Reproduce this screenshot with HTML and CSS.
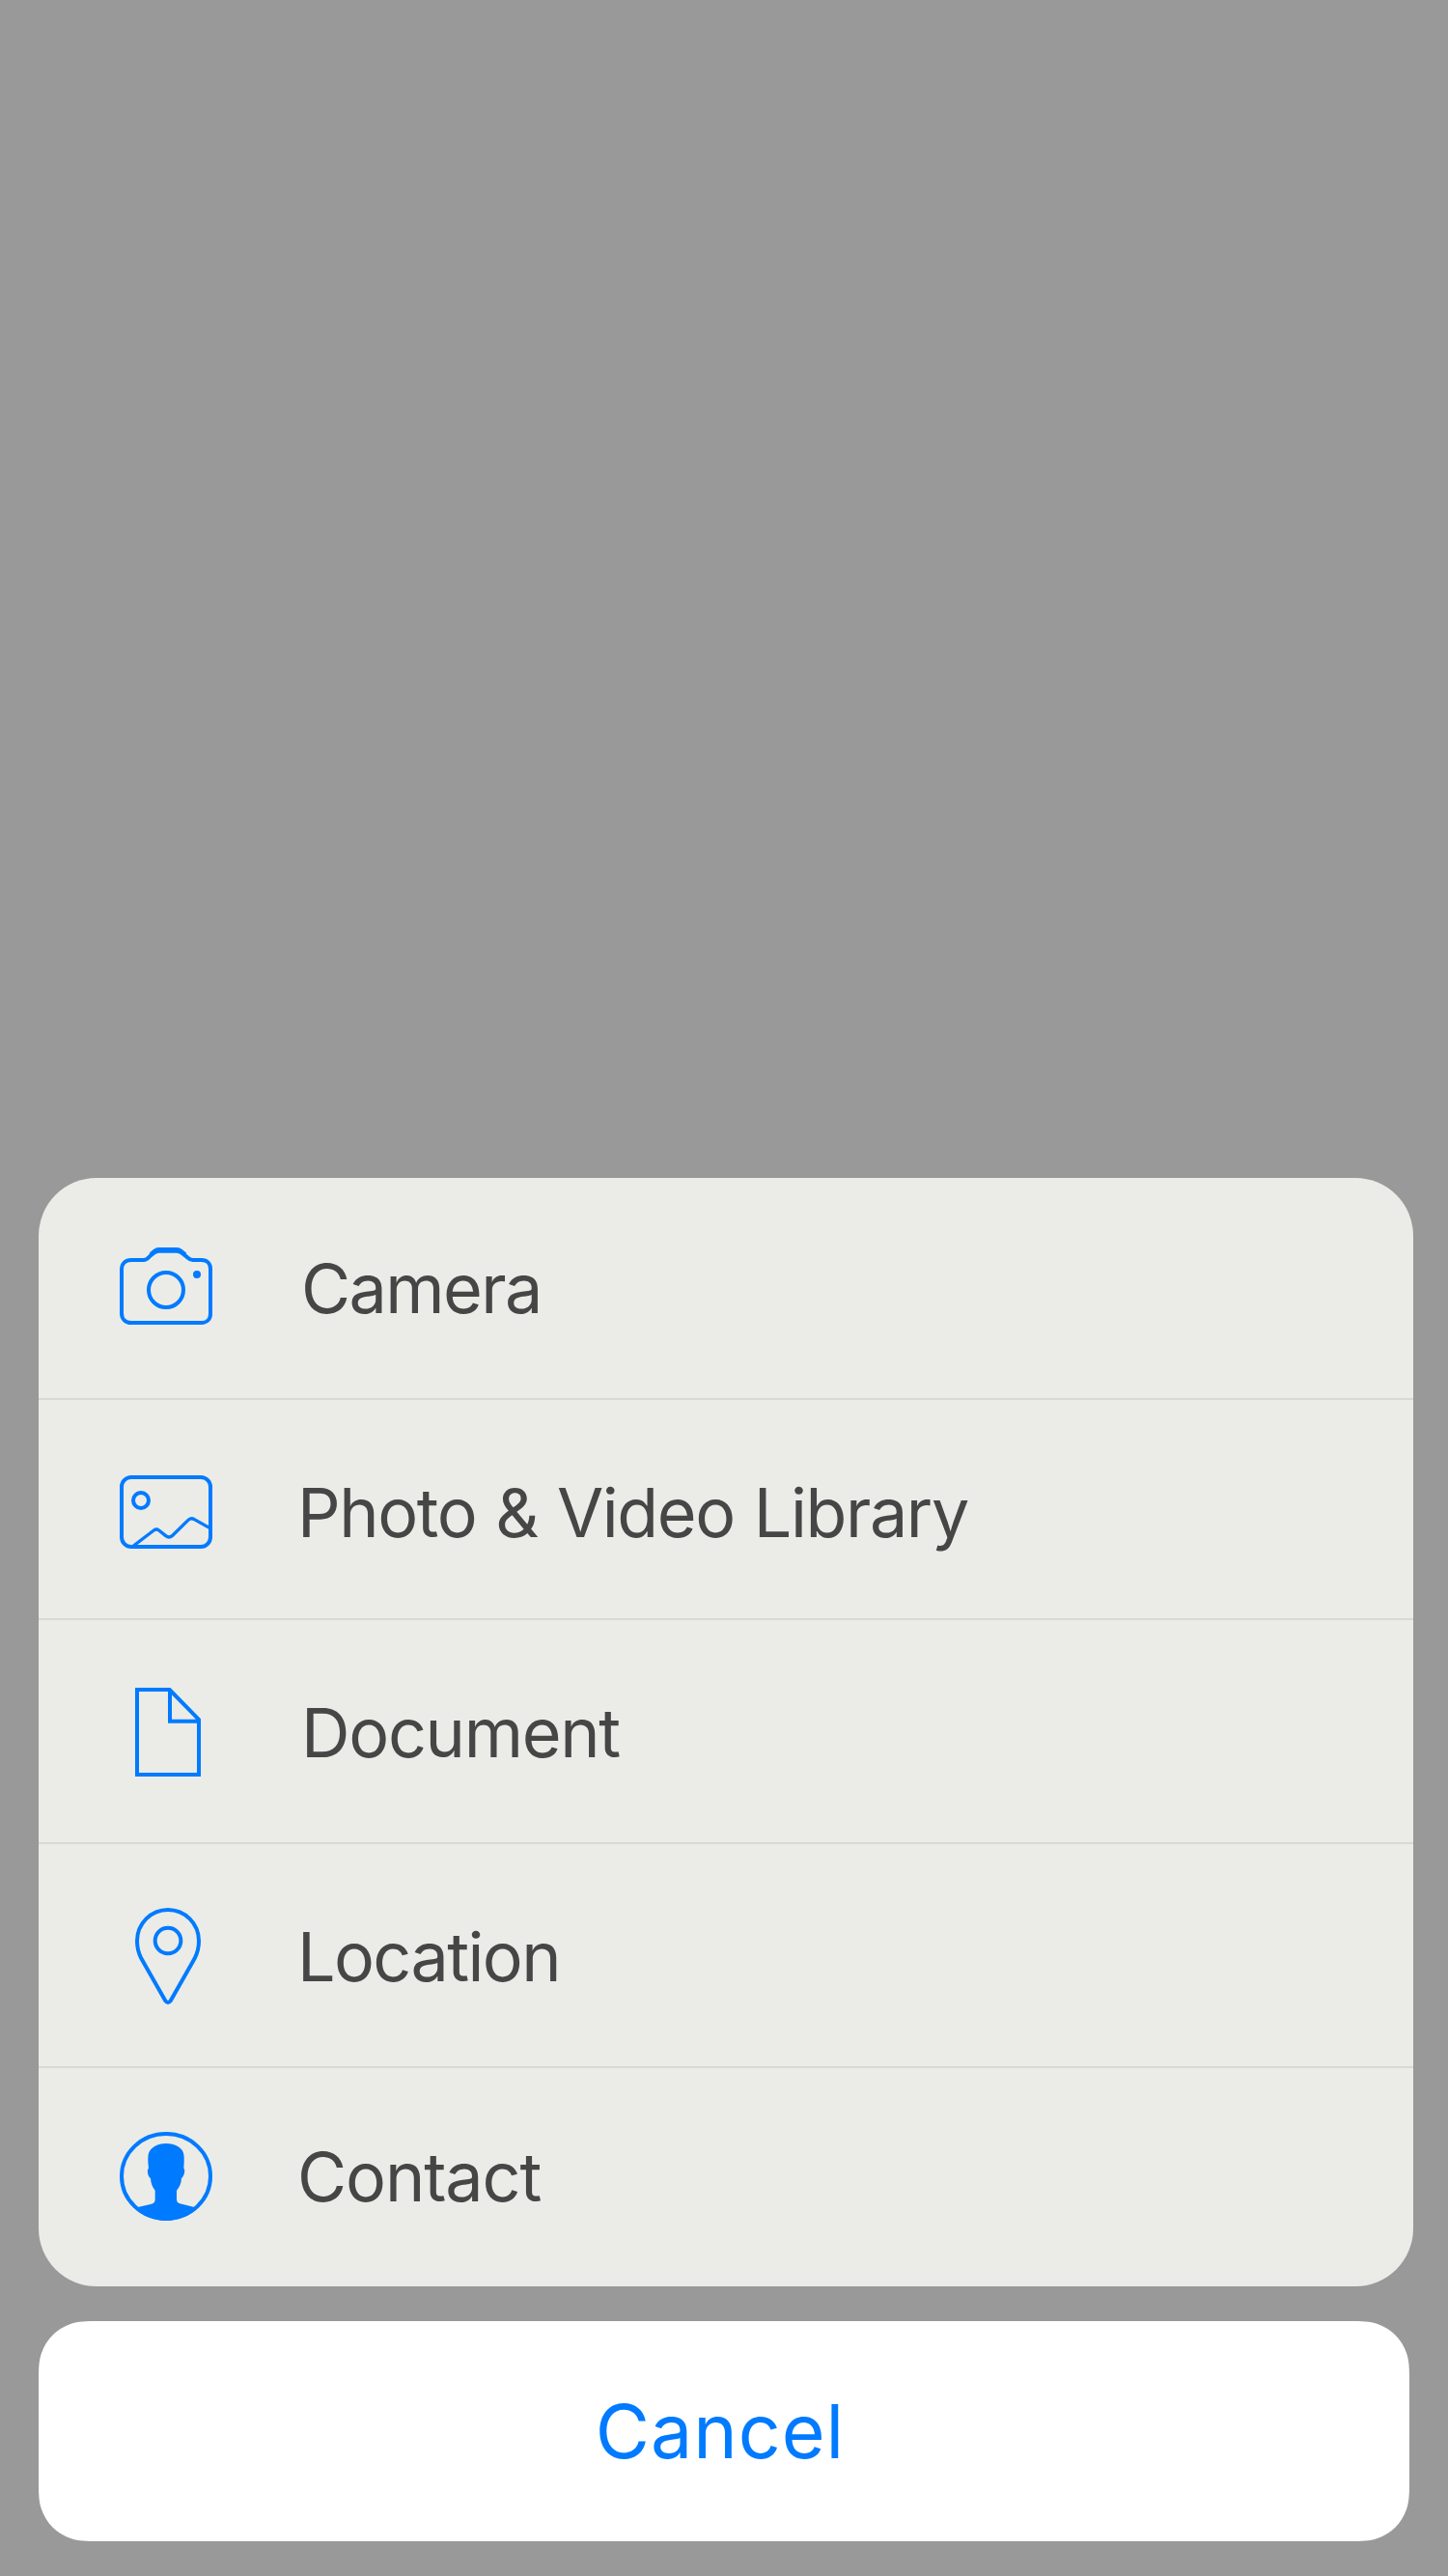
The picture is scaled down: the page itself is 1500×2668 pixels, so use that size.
FILE: index.html
```html
<!DOCTYPE html>
<html lang="en">
<head>
<meta charset="utf-8">
<title>Attachment menu</title>
<link rel="stylesheet" href="styles.css">
</head>
<body>
<main class="screen">
  <ul class="sheet">
    <li class="row row-camera">
      <svg class="icon" viewBox="0 0 420 360" fill="none" stroke="#007aff" stroke-width="12">
        <path d="M108 105H147C155 105 160 99 165 94L178 83C183 79 187 77 194 77H249C256 77 260 79 265 83L280 95C286 100 290 105 299 105H326C344 105 354 117 354 133V272C354 289 343 300 326 300H108C90 300 78 288 78 270V135C78 117 90 105 108 105Z"/>
        <path d="M168 88L180 77Q186 72 194 72H249Q257 72 263 77L276 88"/>
        <circle cx="216" cy="198" r="54"/>
        <circle cx="312" cy="150" r="12" fill="#007aff" stroke="none"/>
      </svg>
      <span class="label">Camera</span>
    </li>
    <li class="row row-photo">
      <svg class="icon" viewBox="0 0 420 360" fill="none" stroke="#007aff" stroke-width="12">
        <rect x="78" y="90" width="276" height="216" rx="30"/>
        <circle cx="138" cy="162" r="24"/>
        <path stroke-width="10" d="M115 303L178 255Q186 249 194 255L215 272Q225 280 235 272L284 224Q293 214 304 221L352 248"/>
      </svg>
      <span class="label">Photo &amp; Video Library</span>
    </li>
    <li class="row row-document">
      <svg class="icon" viewBox="0 0 420 360" fill="none" stroke="#007aff" stroke-width="12">
        <path d="M126 60H227L318 153V324H126ZM228 60V158H318"/>
      </svg>
      <span class="label">Document</span>
    </li>
    <li class="row row-location">
      <svg class="icon icon-tall" viewBox="0 0 420 390" fill="none" stroke="#007aff" stroke-width="12">
        <path d="M214 337L139 205C130 188 126 170 126 151C126 97 169 54 222 54S318 97 318 151C318 170 314 188 305 205L230 337Q222 347 214 337Z"/>
        <circle cx="222" cy="150" r="40"/>
      </svg>
      <span class="label">Location</span>
    </li>
    <li class="row row-contact">
      <svg class="icon" viewBox="0 0 420 360">
        <ellipse cx="216" cy="192" rx="138" ry="132" fill="none" stroke="#007aff" stroke-width="12"/>
        <path fill="#007aff" d="M125 289L171 278Q182 275 182 264V236Q169 220 168 198C160 194 155 171 162 167C159 145 160 132 161 124C166 103 189 90 216 90S268 103 271 124C273 137 272 152 271 167C277 171 272 194 264 198Q263 220 249 236V264Q250 275 259 277L307 289Q270 330 216 330T125 289Z"/>
      </svg>
      <span class="label">Contact</span>
    </li>
  </ul>
  <button class="cancel" type="button">Cancel</button>
</main>
</body>
</html>
```
FILE: styles.css
```css
* {
  box-sizing: border-box;
}

body {
  margin: 0;
  background: #999;
  font-family: Inter, "Liberation Sans", sans-serif;
}

.screen {
  display: flex;
  flex-direction: column;
  justify-content: flex-end;
  gap: 36px;
  height: 2668px;
  padding: 0 36px 36px 40px;
}

.sheet {
  margin: 0;
  padding: 0;
  list-style: none;
  overflow: hidden;
  border-radius: 60px;
  background: #ebece7;
}

.row {
  display: flex;
  align-items: flex-start;
  height: 232px;
  padding: 50px 0 0 60px;
  border-bottom: 2px solid #d8d9d4;
}

.icon {
  flex: none;
  width: 140px;
  height: 120px;
}

.icon-tall {
  height: 130px;
}

.label {
  margin-left: 68px;
  color: #464646;
  font-size: 70px;
  line-height: 130px;
  letter-spacing: -1.3px;
  white-space: nowrap;
}

.row-camera {
  height: 230px;
}

.row-camera .label {
  margin-left: 72px;
  letter-spacing: -1.6px;
}

.row-photo {
  height: 228px;
}

.row-photo .label {
  padding-top: 2px;
  letter-spacing: -1.4px;
  word-spacing: 1.7px;
}

.row-document {
  padding-top: 52px;
}

.row-document .label {
  margin-left: 72px;
}

.row-location .label {
  padding-top: 2px;
  letter-spacing: -1.6px;
}

.row-contact {
  height: 226px;
  padding-top: 48px;
  border-bottom: 0;
}

.row-contact .label {
  letter-spacing: -1.1px;
}

.cancel {
  width: 1420px;
  height: 228px;
  padding: 0 8px 0 0;
  border: 0;
  background: #fff;
  color: #007aff;
  font: 400 77px/228px Inter, "Liberation Sans", sans-serif;
  letter-spacing: 1px;
  clip-path: path("M0 62C0 50 .1 41 3 33A50 50 0 0 1 33 3C41 .1 50 0 62 0H1358C1370 0 1379 .1 1387 3A50 50 0 0 1 1417 33C1419.9 41 1420 50 1420 62V166C1420 178 1419.9 187 1417 195A50 50 0 0 1 1387 225C1379 227.9 1370 228 1358 228H62C50 228 41 227.9 33 225A50 50 0 0 1 3 195C.1 187 0 178 0 166Z");
}
```
